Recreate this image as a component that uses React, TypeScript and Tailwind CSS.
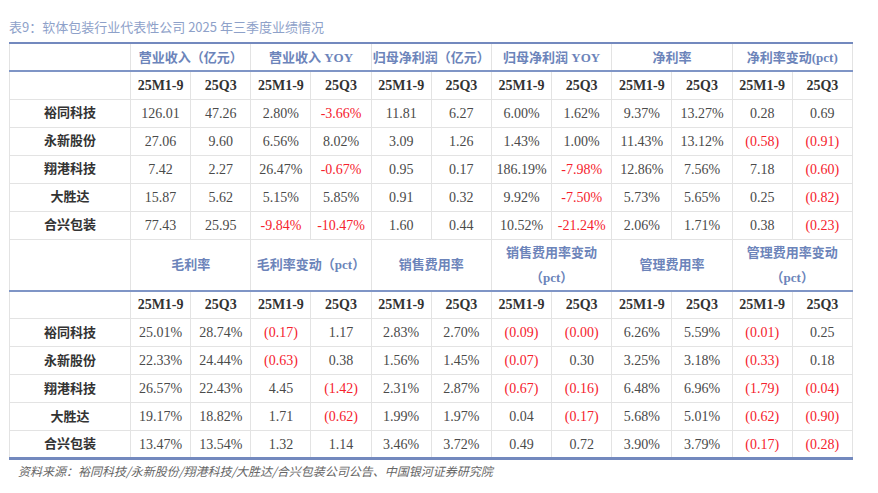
import React from 'react';

const groups1 = ['营业收入（亿元）', '营业收入 YOY', '归母净利润（亿元）', '归母净利润 YOY', '净利率', '净利率变动(pct)'];
const groups2 = ['毛利率', '毛利率变动（pct）', '销售费用率', '销售费用率变动|（pct）', '管理费用率', '管理费用率变动|（pct）'];

const rows1 = [
  ['裕同科技', '126.01', '47.26', '2.80%', '-3.66%', '11.81', '6.27', '6.00%', '1.62%', '9.37%', '13.27%', '0.28', '0.69'],
  ['永新股份', '27.06', '9.60', '6.56%', '8.02%', '3.09', '1.26', '1.43%', '1.00%', '11.43%', '13.12%', '(0.58)', '(0.91)'],
  ['翔港科技', '7.42', '2.27', '26.47%', '-0.67%', '0.95', '0.17', '186.19%', '-7.98%', '12.86%', '7.56%', '7.18', '(0.60)'],
  ['大胜达', '15.87', '5.62', '5.15%', '5.85%', '0.91', '0.32', '9.92%', '-7.50%', '5.73%', '5.65%', '0.25', '(0.82)'],
  ['合兴包装', '77.43', '25.95', '-9.84%', '-10.47%', '1.60', '0.44', '10.52%', '-21.24%', '2.06%', '1.71%', '0.38', '(0.23)'],
];

const rows2 = [
  ['裕同科技', '25.01%', '28.74%', '(0.17)', '1.17', '2.83%', '2.70%', '(0.09)', '(0.00)', '6.26%', '5.59%', '(0.01)', '0.25'],
  ['永新股份', '22.33%', '24.44%', '(0.63)', '0.38', '1.56%', '1.45%', '(0.07)', '0.30', '3.25%', '3.18%', '(0.33)', '0.18'],
  ['翔港科技', '26.57%', '22.43%', '4.45', '(1.42)', '2.31%', '2.87%', '(0.67)', '(0.16)', '6.48%', '6.96%', '(1.79)', '(0.04)'],
  ['大胜达', '19.17%', '18.82%', '1.71', '(0.62)', '1.99%', '1.97%', '0.04', '(0.17)', '5.68%', '5.01%', '(0.62)', '(0.90)'],
  ['合兴包装', '13.47%', '13.54%', '1.32', '1.14', '3.46%', '3.72%', '0.49', '0.72', '3.90%', '3.79%', '(0.17)', '(0.28)'],
];

const serif = "font-['Liberation_Serif','Noto_Sans_CJK_SC',serif]";
const cell = 'border border-[#e3e3e3] p-0 text-center';

const GroupRow = ({ items, tall, topBlue }: { items: string[]; tall?: boolean; topBlue?: boolean }) => (
  <tr className={tall ? 'h-[49px]' : 'h-[28px]'}>
    <td className={`${cell} border-b-2 border-b-[#7f95c6] ${topBlue ? 'border-t-[1.5px] border-t-[#7f95c6]' : 'border-t-2 border-t-[#7389be]'}`} />
    {items.map((g) => (
      <td
        key={g}
        colSpan={2}
        className={`${cell} border-b-2 border-b-[#7f95c6] ${topBlue ? 'border-t-[1.5px] border-t-[#7f95c6]' : 'border-t-2 border-t-[#7389be]'} whitespace-nowrap overflow-hidden text-[13px] font-bold text-[#6c84ba] leading-[25px]`}
      >
        {g.split('|').map((part, i) => (
          <div key={i}>{part}</div>
        ))}
      </td>
    ))}
  </tr>
);

const SubRow = () => (
  <tr className="h-[28px]">
    <td className={cell} />
    {Array.from({ length: 6 }).map((_, i) => (
      <React.Fragment key={i}>
        <td className={`${cell} text-[14px] font-bold text-[#333]`}>25M1-9</td>
        <td className={`${cell} text-[14px] font-bold text-[#333]`}>25Q3</td>
      </React.Fragment>
    ))}
  </tr>
);

const DataRows = ({ rows, last }: { rows: string[][]; last?: boolean }) => (
  <>
    {rows.map((r, ri) => (
      <tr key={r[0]} className="h-[28px]">
        {r.map((v, i) => {
          const red = v.startsWith('-') || v.startsWith('(');
          const bottom = last && ri === rows.length - 1 ? 'border-b-[3px] border-b-[#7389be]' : '';
          if (i === 0)
            return (
              <td key={i} className={`${cell} ${bottom} text-[13px] font-bold text-[#333]`}>
                {v}
              </td>
            );
          return (
            <td key={i} className={`${cell} ${bottom} text-[14px] ${red ? 'text-[#f5222d]' : 'text-[#4a4a4a]'}`}>
              {v}
            </td>
          );
        })}
      </tr>
    ))}
  </>
);

export default function App() {
  return (
    <div className={`w-[878px] h-[493px] bg-white pt-[18px] ${serif}`}>
      <div className="pl-[9px] h-[18px] leading-[18px] text-[13px] text-[#8ea1c9] font-['Noto_Sans_CJK_SC',sans-serif]">
        表9：软体包装行业代表性公司 2025 年三季度业绩情况
      </div>
      <table className="ml-[9px] mt-[6px] w-[844px] table-fixed border-collapse">
        <colgroup>
          <col className="w-[121px]" />
          {Array.from({ length: 12 }).map((_, i) => (
            <col key={i} />
          ))}
        </colgroup>
        <tbody>
          <GroupRow items={groups1} />
          <SubRow />
          <DataRows rows={rows1} />
          <GroupRow items={groups2} tall topBlue />
          <SubRow />
          <DataRows rows={rows2} last />
        </tbody>
      </table>
      <div className="pl-[18px] mt-[2px] text-[12px] italic text-[#666] font-['Noto_Sans_CJK_SC',sans-serif]">
        资料来源：裕同科技/永新股份/翔港科技/大胜达/合兴包装公司公告、中国银河证券研究院
      </div>
    </div>
  );
}
